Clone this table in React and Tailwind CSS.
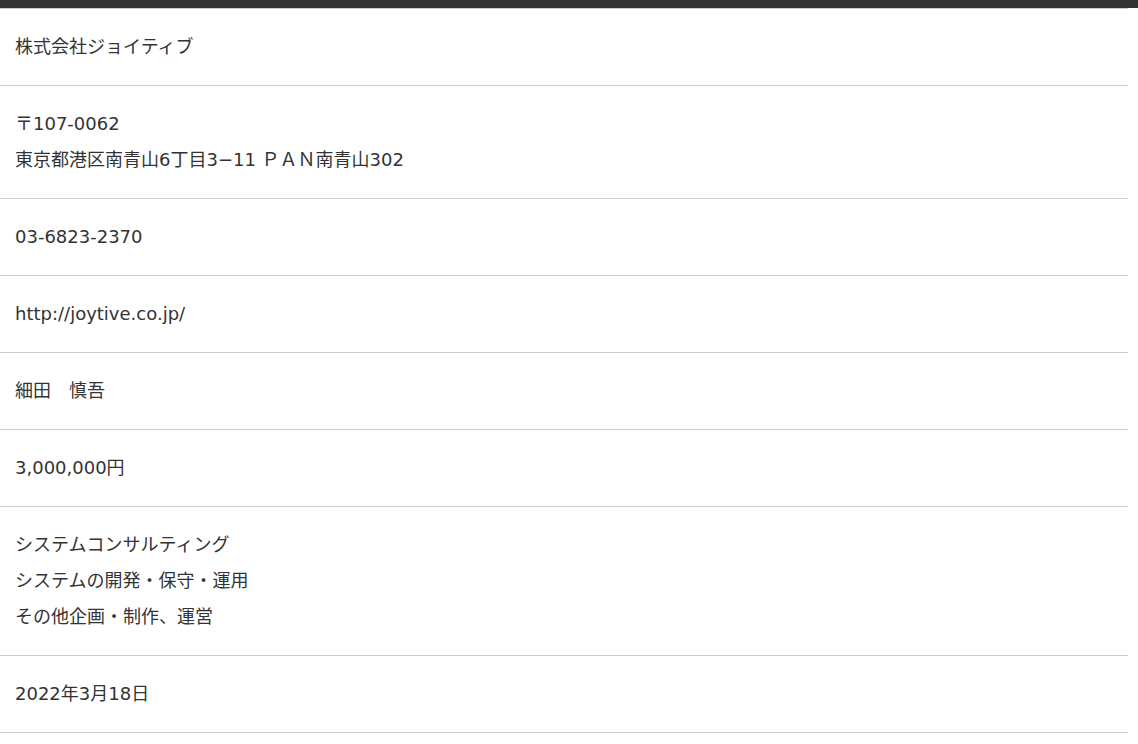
export default function App() {
  const rows = [
    ["株式会社ジョイティブ"],
    ["〒107-0062", "東京都港区南青山6丁目3−11 ＰＡＮ南青山302"],
    ["03-6823-2370"],
    ["http://joytive.co.jp/"],
    ["細田　慎吾"],
    ["3,000,000円"],
    ["システムコンサルティング", "システムの開発・保守・運用", "その他企画・制作、運営"],
    ["2022年3月18日"],
  ];
  return (
    <div className="min-h-[744px] bg-white" style={{ fontFamily: '"DejaVu Sans", "Noto Sans CJK JP", sans-serif' }}>
      <div className="h-2 bg-[#333333]" />
      <div className="w-[1128px] border-t border-[#cccccc]">
        {rows.map((lines, i) => (
          <div key={i} className="border-b border-[#cccccc] py-5 pl-[15px]">
            {lines.map((l, j) => (
              <div key={j} className="text-[18px] leading-[36px] text-[#333333]">{l}</div>
            ))}
          </div>
        ))}
      </div>
    </div>
  );
}
